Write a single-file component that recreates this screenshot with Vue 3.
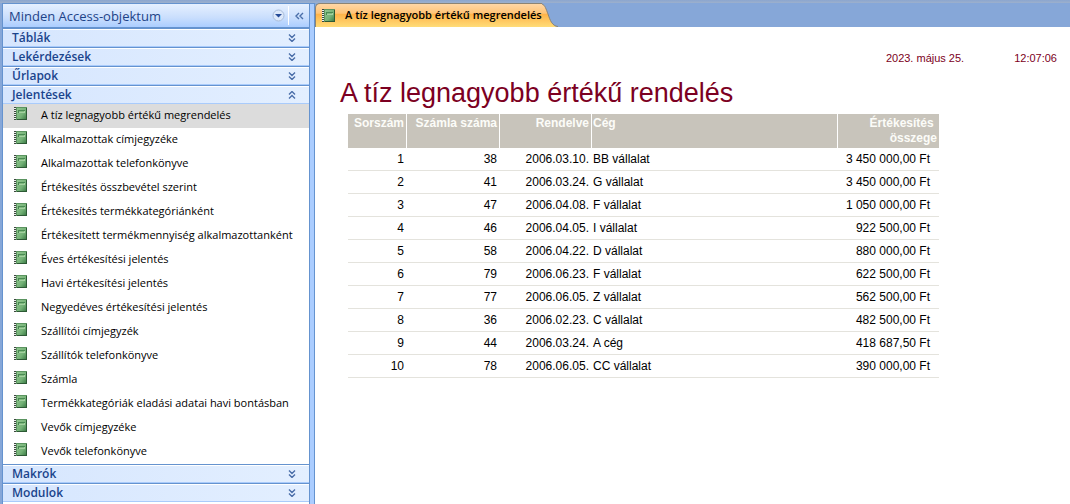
<script setup>
import { ref } from 'vue'

const selected = ref(0)
const topGroups = ['Táblák', 'Lekérdezések', 'Űrlapok']
const bottomGroups = ['Makrók', 'Modulok']
const reports = [
  'A tíz legnagyobb értékű megrendelés',
  'Alkalmazottak címjegyzéke',
  'Alkalmazottak telefonkönyve',
  'Értékesítés összbevétel szerint',
  'Értékesítés termékkategóriánként',
  'Értékesített termékmennyiség alkalmazottanként',
  'Éves értékesítési jelentés',
  'Havi értékesítési jelentés',
  'Negyedéves értékesítési jelentés',
  'Szállítói címjegyzék',
  'Szállítók telefonkönyve',
  'Számla',
  'Termékkategóriák eladási adatai havi bontásban',
  'Vevők címjegyzéke',
  'Vevők telefonkönyve',
]
const rows = [
  [1, 38, '2006.03.10.', 'BB vállalat', '3 450 000,00 Ft'],
  [2, 41, '2006.03.24.', 'G vállalat', '3 450 000,00 Ft'],
  [3, 47, '2006.04.08.', 'F vállalat', '1 050 000,00 Ft'],
  [4, 46, '2006.04.05.', 'I vállalat', '922 500,00 Ft'],
  [5, 58, '2006.04.22.', 'D vállalat', '880 000,00 Ft'],
  [6, 79, '2006.06.23.', 'F vállalat', '622 500,00 Ft'],
  [7, 77, '2006.06.05.', 'Z vállalat', '562 500,00 Ft'],
  [8, 36, '2006.02.23.', 'C vállalat', '482 500,00 Ft'],
  [9, 44, '2006.03.24.', 'A cég', '418 687,50 Ft'],
  [10, 78, '2006.06.05.', 'CC vállalat', '390 000,00 Ft'],
]
</script>

<template>
  <svg class="defs" width="0" height="0" aria-hidden="true">
    <defs>
      <linearGradient id="cover" x1="0" y1="0" x2="1" y2="1">
        <stop offset="0" stop-color="#8fc48c" />
        <stop offset="0.6" stop-color="#74b277" />
        <stop offset="1" stop-color="#3f7f49" />
      </linearGradient>
      <symbol id="book" viewBox="0 0 13 13">
        <rect x="2" y="0" width="11" height="13" fill="#5b9460" />
        <path d="M12.500 1v12M3 12.500h10" stroke="#2d5935" />
        <rect x="3" y="1" width="9" height="11" fill="url(#cover)" />
        <path d="M0 0h2v13H0z" fill="#eef1ee" />
        <path d="M0 .5h2M0 2.500h2M0 4.500h2M0 6.500h2M0 8.500h2M0 10.500h2M0 12.500h2" stroke="#3c463e" />
        <rect x="4.500" y="3.500" width="6" height="2" fill="#7db87d" stroke="#a3d0a0" />
        <path d="M4 3.500h7M4.500 3v3" stroke="#4a8a53" />
      </symbol>
      <symbol id="down" viewBox="0 0 8 8">
        <path d="M1 0.500l3 3 3-3M1 4.500l3 3 3-3" fill="none" stroke="#4a6ea9" stroke-width="1.400" />
      </symbol>
    </defs>
  </svg>

  <div class="app">
    <div class="strip"></div>
    <div class="body">
      <nav class="nav">
        <header class="nav-head">
          <button class="nav-title">
            <span>Minden Access-objektum</span>
            <svg width="13" height="13" viewBox="0 0 13 13" aria-hidden="true">
              <circle cx="6.500" cy="6.500" r="5.500" fill="#dce8fa" stroke="#a9bcd9" />
              <path d="M3 5h7L6.500 8.500z" fill="#244a97" />
            </svg>
          </button>
          <button class="collapse" aria-label="Panel összecsukása">
            <svg width="9" height="8" viewBox="0 0 9 8" aria-hidden="true">
              <path d="M4 1L1 4l3 3M8 1L5 4l3 3" fill="none" stroke="#4a6ea9" stroke-width="1.400" />
            </svg>
          </button>
        </header>
        <button v-for="g in topGroups" :key="g" class="group">
          <span>{{ g }}</span><svg width="8" height="8" aria-hidden="true"><use href="#down" /></svg>
        </button>
        <button class="group" aria-expanded="true">
          <span>Jelentések</span><svg class="up" width="8" height="8" aria-hidden="true"><use href="#down" /></svg>
        </button>
        <ul class="items">
          <li v-for="(r, i) in reports" :key="r">
            <button class="item" :class="{ active: i === selected }" @click="selected = i">
              <svg width="13" height="13" aria-hidden="true"><use href="#book" /></svg>
              <span>{{ r }}</span>
            </button>
          </li>
        </ul>
        <button v-for="g in bottomGroups" :key="g" class="group">
          <span>{{ g }}</span><svg width="8" height="8" aria-hidden="true"><use href="#down" /></svg>
        </button>
      </nav>
      <div class="splitter"></div>
      <main class="main">
        <div class="tabs">
          <button class="tab">
            <svg width="13" height="13" aria-hidden="true"><use href="#book" /></svg>
            <span>A tíz legnagyobb értékű megrendelés</span>
          </button>
          <svg width="16" height="24" viewBox="0 0 16 24" aria-hidden="true">
            <defs>
              <linearGradient id="tabfill" x1="0" y1="0" x2="0" y2="1">
                <stop offset="0" stop-color="#ffd7a6" />
                <stop offset="0.400" stop-color="#ffc477" />
                <stop offset="0.450" stop-color="#ffb349" />
                <stop offset="1" stop-color="#ffdc78" />
              </linearGradient>
            </defs>
            <path d="M0 1C3 2 4 6 6 11C8 17 10 23 16 24H0z" fill="url(#tabfill)" />
            <path d="M0 1C3 2 4 6 6 11C8 17 10 23 16 23.500" fill="none" stroke="#8c8474" />
          </svg>
        </div>
        <article class="report">
          <div class="stamp"><span>2023. május 25.</span><time>12:07:06</time></div>
          <h1>A tíz legnagyobb értékű rendelés</h1>
          <table>
            <colgroup>
              <col class="c1"><col class="c2"><col class="c3"><col class="c4"><col class="c5">
            </colgroup>
            <thead>
              <tr>
                <th>Sorszám</th>
                <th>Számla száma</th>
                <th>Rendelve</th>
                <th class="left">Cég</th>
                <th>Értékesítés&nbsp;<br>összege</th>
              </tr>
            </thead>
            <tbody>
              <tr v-for="row in rows" :key="row[0]">
                <td>{{ row[0] }}</td>
                <td>{{ row[1] }}</td>
                <td>{{ row[2] }}</td>
                <td class="left">{{ row[3] }}</td>
                <td class="money">{{ row[4] }}</td>
              </tr>
            </tbody>
          </table>
        </article>
      </main>
    </div>
  </div>
</template>

<style>
body {
  margin: 0;
  background: #fff;
}
</style>

<style scoped>
* {
  box-sizing: border-box;
}
button {
  margin: 0;
  padding: 0;
  border: 0;
  background: none;
  font: inherit;
  color: inherit;
  text-align: left;
}
svg {
  flex: none;
  display: block;
}
.defs {
  position: absolute;
}
.app {
  display: flex;
  flex-direction: column;
  min-height: 100vh;
  font-family: "Open Sans", "Noto Sans", sans-serif;
  font-size: 11px;
  color: #000;
}
.strip {
  height: 3px;
  background: linear-gradient(#8ba6cf, #9db0cc);
}
.body {
  flex: 1;
  display: flex;
}
.nav {
  width: 308px;
  flex: none;
  border: solid #6593cf;
  border-width: 1px 1px 0 1px;
  margin-left: 2px;
  background: #fff;
  box-shadow: -2px 0 #86a7d8;
}
.nav-head {
  display: flex;
  height: 24px;
  border-bottom: 1px solid #6593cf;
  background: linear-gradient(#e6f0ff, #c9defd 60%, #abcdff);
  color: #1e4387;
}
.nav-title {
  flex: 1;
  display: flex;
  align-items: center;
  justify-content: space-between;
  padding: 0 3px 0 6px;
  margin: 2px 0;
  border-right: 1px solid #fff;
  font-size: 13px;
  line-height: 18px;
}
.collapse {
  width: 20px;
  display: flex;
  align-items: center;
  justify-content: center;
}
.group {
  display: flex;
  align-items: center;
  justify-content: space-between;
  width: 100%;
  height: 19px;
  padding: 0 13px 0 9px;
  border-top: 1px solid #6593cf;
  border-bottom: 1px solid #a9cbfb;
  background: linear-gradient(90deg, #d6e6fe, #e3efff);
  box-shadow: inset 0 1px #fff;
  font-size: 12px;
  line-height: 16px;
  font-weight: 600;
  color: #1a448c;
}
.up {
  transform: rotate(180deg);
}
.items {
  list-style: none;
  margin: 0;
  padding: 0;
}
.item {
  display: flex;
  align-items: flex-start;
  gap: 14px;
  width: 100%;
  height: 24px;
  padding: 3px 4px 0 11px;
  white-space: nowrap;
  line-height: 16px;
}
.active {
  background: #dcdcdc;
}
.splitter {
  width: 5px;
  flex: none;
  background: #abcdff;
  border-right: 1px solid #6593cf;
  border-top: 1px solid #6593cf;
}
.main {
  flex: 1;
  min-width: 0;
  background: #fff;
}
.tabs {
  display: flex;
  height: 24px;
  background: #86a7d8;
}
.tab {
  display: flex;
  align-items: center;
  gap: 10px;
  padding: 0 0 1px 6px;
  border: solid #8c8474;
  border-width: 1px 0 0 1px;
  border-radius: 5px 0 0 0;
  background: linear-gradient(#ffd7a6, #ffc477 40%, #ffb349 45%, #ffdc78);
  font-weight: 600;
  line-height: 16px;
  white-space: nowrap;
}
.report {
  padding: 23px 13px 24px 25px;
  font-family: "Liberation Sans", Arial, sans-serif;
  font-size: 12px;
}
.stamp {
  display: flex;
  justify-content: flex-end;
  gap: 50px;
  font-size: 11px;
  line-height: 16px;
  color: #7c0022;
}
h1 {
  margin: 11px 0 5px;
  font-size: 27px;
  line-height: 32px;
  font-weight: 400;
  color: #7c0022;
}
table {
  table-layout: fixed;
  width: 591px;
  margin-left: 8px;
  border-collapse: separate;
  border-spacing: 0;
}
.c1 { width: 59px; }
.c2 { width: 93px; }
.c3 { width: 92px; }
.c4 { width: 246px; }
.c5 { width: 101px; }
th {
  height: 34px;
  padding: 2px;
  background: #c8c4bb;
  color: #fcfcf8;
  border-right: 1px solid #fff;
  text-align: right;
  vertical-align: top;
  line-height: 15px;
  white-space: nowrap;
}
th:last-child {
  border-right: 0;
}
td {
  height: 23px;
  padding: 0 3px 1px 2px;
  border-bottom: 1px solid #e4e3dd;
  text-align: right;
  line-height: 16px;
  white-space: nowrap;
}
.left {
  text-align: left;
  padding-left: 1px;
}
.money {
  padding-right: 9px;
}
</style>
